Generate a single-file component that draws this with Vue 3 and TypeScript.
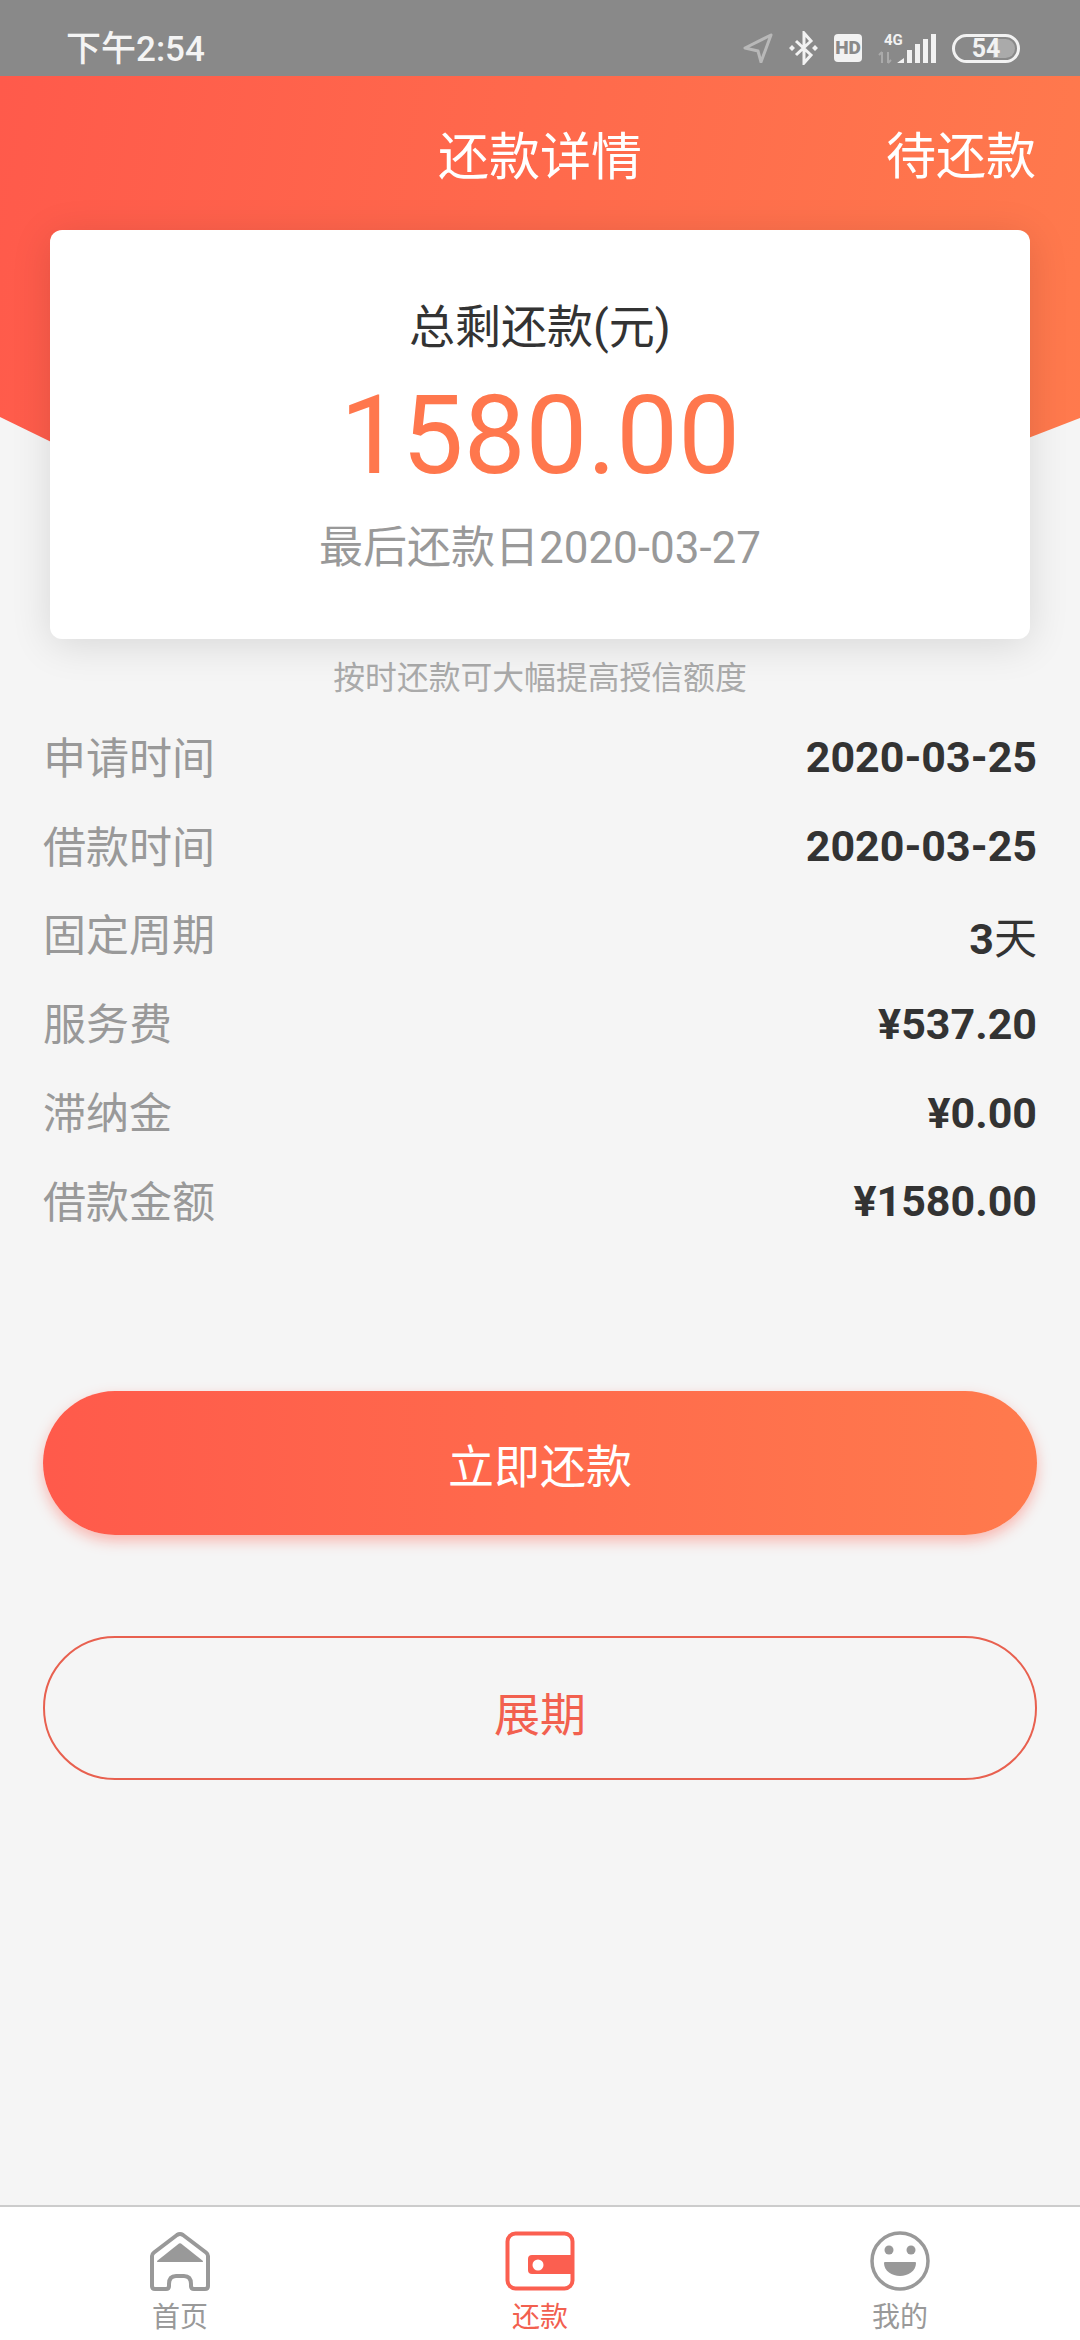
<script setup lang="ts">
const rows: { label: string; value: string; unit?: string }[] = [
  { label: '申请时间', value: '2020-03-25' },
  { label: '借款时间', value: '2020-03-25' },
  { label: '固定周期', value: '3', unit: '天' },
  { label: '服务费', value: '¥537.20' },
  { label: '滞纳金', value: '¥0.00' },
  { label: '借款金额', value: '¥1580.00' },
]
</script>

<template>
  <div class="page">
    <div class="status">
      <span class="time">下午2:54</span>
      <div class="status-icons">
        <svg width="30" height="30" viewBox="0 0 30 30"><path d="M28 2 2 15l13 3 3 11z" fill="none" stroke="#b8b8b8" stroke-width="3" stroke-linejoin="round"/></svg>
        <svg width="29" height="34" viewBox="0 0 29 34"><path d="M7 10l15 14-7 8V2l7 8L7 24" fill="none" stroke="#f2f2f2" stroke-width="3"/><path d="M3 14l3 3-3 3-3-3zM26 14l3 3-3 3-3-3z" fill="#f2f2f2"/></svg>
        <span class="hd">HD</span>
        <svg width="58" height="33" viewBox="0 0 58 33"><path d="M4 31V20M1 23l3-3M10 20v11M10 31l3-3" stroke="#aaa" stroke-width="2" fill="none"/><path d="M19 31l7-5v5zM29 31V18h5v13zM37 31V12h5v19zM45 31V7h5v24zM53 31V2h5v29z" fill="#f2f2f2"/><text x="6" y="13" class="g4">4G</text></svg>
        <div class="battery"><div class="battery-fill"></div><span>54</span></div>
      </div>
    </div>

    <header class="hero">
      <div class="hero-bar">
        <h1>还款详情</h1>
        <span class="state">待还款</span>
      </div>
    </header>

    <section class="card">
      <div class="card-title">总剩还款(元)</div>
      <div class="amount">1580.00</div>
      <div class="due">最后还款日2020-03-27</div>
    </section>

    <p class="hint">按时还款可大幅提高授信额度</p>

    <dl class="rows">
      <div v-for="r in rows" :key="r.label" class="row">
        <dt>{{ r.label }}</dt>
        <dd>{{ r.value }}<span v-if="r.unit" class="unit">{{ r.unit }}</span></dd>
      </div>
    </dl>

    <button class="btn primary">立即还款</button>
    <button class="btn outline">展期</button>

    <nav class="tabs">
      <div class="tab">
        <svg width="64" height="60" viewBox="0 0 64 60"><path d="M4 25q0-2 2-3.500L29 4q3-2 6 0l23 17.500q2 1.500 2 3.500v30q0 3-3 3H46q-3 0-3-3v-2q0-8-7-8h-8q-7 0-7 8v2q0 3-3 3H7q-3 0-3-3z" fill="none" stroke="#999" stroke-width="4" stroke-linejoin="round"/><path d="M31 12.500q1-.7 2 0L55 30q.5 1-1 1H10q-1.500 0-1-1z" fill="#999"/></svg>
        <span>首页</span>
      </div>
      <div class="tab active">
        <svg width="70" height="60" viewBox="0 0 70 60"><rect x="2.500" y="2.500" width="65" height="55" rx="8" fill="none" stroke="#fb5f50" stroke-width="4"/><path d="M68 24H27q-4 0-4 4v11q0 4 4 4h41z" fill="#fb5f50"/><circle cx="33" cy="34" r="5.500" fill="#fff"/></svg>
        <span>还款</span>
      </div>
      <div class="tab">
        <svg width="60" height="60" viewBox="0 0 60 60"><circle cx="30" cy="30" r="28" fill="none" stroke="#999" stroke-width="3.500"/><circle cx="19" cy="19" r="4.500" fill="#999"/><circle cx="41" cy="19" r="4.500" fill="#999"/><path d="M15 31h30q1 0 1 1c0 8-8 13-16 13s-16-5-16-13q0-1 1-1z" fill="#999"/></svg>
        <span>我的</span>
      </div>
    </nav>
  </div>
</template>

<style>
html, body { margin: 0; padding: 0; background: #f5f5f5; }
</style>

<style scoped>
.page {
  position: relative;
  width: 1080px;
  height: 2340px;
  overflow: hidden;
  background: #f5f5f5;
  font-family: Roboto, "Noto Sans CJK SC", sans-serif;
  display: flex;
  flex-direction: column;
}
.status {
  height: 76px;
  flex: none;
  background: #898989;
  display: flex;
  justify-content: space-between;
  align-items: center;
  padding: 20px 60px 0 66px;
  box-sizing: border-box;
}
.time { color: #f4f4f4; font-size: 35px; font-weight: 500; margin-top: -6px; }
.status-icons { display: flex; align-items: center; gap: 16px; }
.hd {
  width: 28px; height: 28px; border-radius: 4px; background: #f2f2f2; color: #898989;
  font-size: 19px; font-weight: 900; line-height: 28px; text-align: center;
}
.g4 { font: 700 15px Roboto, sans-serif; fill: #f2f2f2; }
.battery {
  position: relative; width: 68px; height: 29px; border: 3px solid #f2f2f2; border-radius: 15px;
  box-sizing: border-box; color: #f2f2f2; font-size: 25px; font-weight: 700; line-height: 23px; text-align: center; overflow: hidden;
}
.battery span { position: relative; }
.battery-fill { position: absolute; top: 2px; bottom: 2px; right: 2px; width: 22px; background: #aaa; border-radius: 0 10px 10px 0; }

.hero {
  flex: none;
  height: 380px;
  margin-bottom: -226px;
  background: linear-gradient(100deg, #ff5a4b 0%, #ff7a4d 100%);
  clip-path: polygon(0 0, 100% 0, 100% 342px, calc(100% - 80px) 373px, 80px 380px, 0 341px);
}
.hero-bar {
  position: relative;
  height: 154px;
  padding-top: 8px;
  display: flex;
  align-items: center;
  justify-content: center;
  color: #fff;
  box-sizing: border-box;
}
.hero-bar h1 { margin: 0; font-size: 51px; font-weight: 400; line-height: 1; }
.state { position: absolute; right: 44px; top: 50%; transform: translateY(-42%); font-size: 50px; line-height: 1; }

.card {
  position: relative;
  margin: 0 50px;
  height: 409px;
  flex: none;
  background: #fff;
  border-radius: 12px;
  box-shadow: 0 6px 40px rgba(0, 0, 0, .12);
  text-align: center;
  box-sizing: border-box;
  padding-top: 71px;
}
.card-title { font-size: 46px; line-height: 52px; color: #333; }
.amount { font-size: 110px; line-height: 112px; color: #ff774d; margin-top: 27px; }
.due { font-size: 44px; line-height: 50px; color: #999; margin-top: 31px; }

.hint { margin: 19px 0 0; text-align: center; font-size: 31.800px; line-height: 40px; color: #aaa; }

.rows { margin: 15px 43px 0; padding: 0; }
.row { display: flex; justify-content: space-between; align-items: center; height: 88.8px; }
.row dt { font-size: 43px; color: #999; margin-bottom: 5px; }
.row dd { margin: 0; font-size: 43px; font-weight: 700; color: #333; }
.unit { font-weight: 400; }

.btn {
  display: block;
  flex: none;
  margin: 0 43px;
  width: 994px;
  height: 144px;
  border-radius: 72px;
  font-family: inherit;
  font-size: 46px;
  padding: 0;
  box-sizing: border-box;
}
.primary {
  margin-top: 145px;
  border: 0;
  color: #fff;
  background: linear-gradient(90deg, #ff5a4b 0%, #ff7a4d 100%);
  box-shadow: 0 6px 14px rgba(255, 90, 75, .4);
}
.outline {
  margin-top: 101px;
  padding-top: 6px;
  background: transparent;
  border: 2px solid #e8604f;
  color: #f2604f;
}

.tabs {
  margin-top: auto;
  height: 135px;
  flex: none;
  background: #fff;
  border-top: 2px solid #ccc;
  box-sizing: border-box;
  display: grid;
  grid-template-columns: 180px 1fr 180px;
  padding: 0 90px;
}
.tab { display: flex; flex-direction: column; align-items: center; padding-top: 24px; color: #999; font-size: 28px; line-height: 32px; }
.tab span { margin-top: 11px; }
.tab.active { color: #f2604f; }
</style>
